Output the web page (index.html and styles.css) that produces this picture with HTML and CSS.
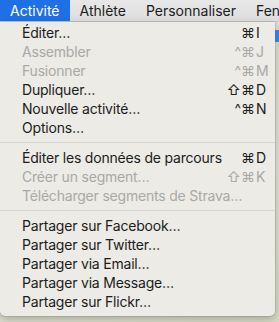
FILE: index.html
```html
<!DOCTYPE html>
<html lang="fr">
<head>
  <meta charset="UTF-8" />
  <title>Menu Activité</title>
  <meta name="viewport" content="width=device-width, initial-scale=1.0">
  <link rel="stylesheet" href="styles.css">
</head>
<body>

  <div class="menubar">
    <span class="menubar-item active">Activité</span>
    <span class="menubar-item">Athlète</span>
    <span class="menubar-item">Personnaliser</span>
    <span class="menubar-item">Fenêtre</span>
  </div>

  <div class="map">
    <span class="map-pin"></span>

    <ul class="menu">
      <li class="item"><span class="label">Éditer…</span><span class="keys"><span class="mods">⌘</span><span class="key">I</span></span></li>
      <li class="item disabled"><span class="label">Assembler</span><span class="keys"><span class="mods">^⌘</span><span class="key">J</span></span></li>
      <li class="item disabled"><span class="label">Fusionner</span><span class="keys"><span class="mods">^⌘</span><span class="key">M</span></span></li>
      <li class="item"><span class="label">Dupliquer…</span><span class="keys"><span class="mods">⇧⌘</span><span class="key">D</span></span></li>
      <li class="item"><span class="label">Nouvelle activité…</span><span class="keys"><span class="mods">^⌘</span><span class="key">N</span></span></li>
      <li class="item"><span class="label">Options…</span></li>
      <li class="separator"></li>
      <li class="item"><span class="label">Éditer les données de parcours</span><span class="keys"><span class="mods">⌘</span><span class="key">D</span></span></li>
      <li class="item disabled"><span class="label">Créer un segment…</span><span class="keys"><span class="mods">⇧⌘</span><span class="key">K</span></span></li>
      <li class="item disabled"><span class="label">Télécharger segments de Strava…</span></li>
      <li class="separator"></li>
      <li class="item"><span class="label">Partager sur Facebook…</span></li>
      <li class="item"><span class="label">Partager sur Twitter…</span></li>
      <li class="item"><span class="label">Partager via Email…</span></li>
      <li class="item"><span class="label">Partager via Message…</span></li>
      <li class="item"><span class="label">Partager sur Flickr…</span></li>
    </ul>
  </div>

</body>
</html>
```

FILE: styles.css
```css
body {
  margin: 0;
  width: 279px;
  height: 322px;
  overflow: hidden;
  font-family: Inter, "Liberation Sans", sans-serif;
  font-size: 14px;
  color: #1c1c1c;
  background: #dcdccf;
}
.menubar {
  display: flex;
  height: 21px;
  line-height: 21px;
  overflow: hidden;
  background: linear-gradient(#e8e8e8, #dedede);
  border-bottom: 1px solid #cfcfcf;
  white-space: nowrap;
}
.menubar-item {
  padding: 0 10px;
}
.menubar-item.active {
  background: #1f6fe6;
  color: white;
}
.map {
  position: relative;
  height: 300px;
  background: linear-gradient(160deg, #d9dccb, #e2e1d4 60%, #d6dac6);
}
.map-pin {
  position: absolute;
  right: 0;
  top: 8px;
  width: 4px;
  height: 12px;
  background: #2f7fe0;
}
.menu {
  list-style: none;
  margin: 0;
  padding: 1px 0 5px;
  width: 275px;
  background: #ecebe6;
  border-radius: 0 0 5px 5px;
  box-shadow: 0 3px 8px rgba(0,0,0,0.25), 0 0 0 0.5px rgba(0,0,0,0.15);
}
.item {
  display: flex;
  align-items: center;
  height: 19px;
  padding: 0 7px 0 22px;
  letter-spacing: -0.2px;
}
.item .label {
  flex: 1;
  white-space: nowrap;
}
.keys {
  display: flex;
  letter-spacing: 0;
}
.mods {
  text-align: right;
}
.key {
  width: 12px;
  margin-left: 1px;
}
.disabled {
  color: #a9a9a7;
}
.separator {
  height: 1px;
  margin: 5px 0;
  background: #d7d6d2;
}
```
